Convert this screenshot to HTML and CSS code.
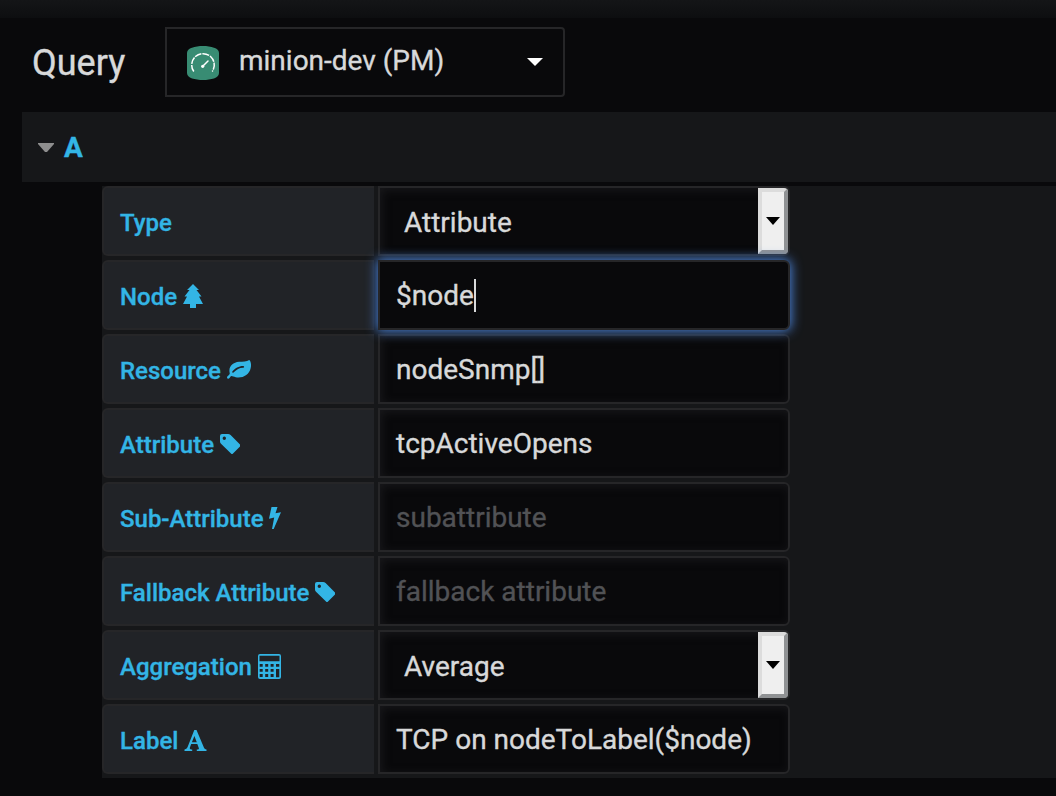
FILE: index.html
```html
<!DOCTYPE html>
<html lang="en">
<head>
<meta charset="utf-8">
<title>Query</title>
<link rel="stylesheet" href="styles.css">
</head>
<body>
<div class="topbar"></div>
<header class="header">
  <h1 class="title">Query</h1>
  <div class="picker">
    <svg class="logo" width="32" height="34" viewBox="0 0 32 34" fill="none">
      <path d="M0 7C0 2 8 0 16 0s16 2 16 7v20c0 5-8 7-16 7S0 32 0 27z" fill="#388c73"/>
      <path d="M6.800 25.500A11.300 11.300 0 1 1 25.200 25.500" stroke="#fff" stroke-width="1.500" stroke-dasharray="7 1"/>
      <path d="M16 20l5-5" stroke="#fff" stroke-width="1.500" stroke-linecap="round"/>
      <circle cx="15.700" cy="20.300" r="1.600" fill="#fff"/>
    </svg>
    <span class="picker-name">minion-dev (PM)</span>
    <svg class="picker-caret" width="16" height="8" viewBox="0 0 16 8"><path d="M0 0h16L8 8z" fill="#fff"/></svg>
  </div>
</header>
<section class="query-head">
  <svg width="16" height="9" viewBox="0 0 16 9"><path d="M0 0h16v1L9 9H7L0 1z" fill="#8e8e8e"/></svg>
  <span class="query-letter">A</span>
</section>
<main class="rows">
  <div class="row"><div class="label">Type</div><div class="field select"><span class="text">Attribute</span><span class="drop"><svg width="14" height="8" viewBox="0 0 14 8"><path d="M0 0h14L7 8z"/></svg></span></div></div>
  <div class="row"><div class="label">Node
    <svg class="icon tree" width="20" height="24" viewBox="0 0 20 24"><path d="M10 0l6 6h-2.500l5 6.500H16l4 7.500h-7v4H7v-4H0l4-7.500H1.500l5-6.500H4z"/></svg></div><div class="field focused"><span class="text">$node</span><span class="cursor"></span></div></div>
  <div class="row"><div class="label">Resource
    <svg class="icon leaf" width="24" height="19" viewBox="0 0 24 19"><path fill-rule="evenodd" d="M22.300 0C24 1.500 24.400 5 23.700 8c-1.500 7-8 10.500-15 9.300-1.800-.4-3-1.200-4.300-1.200-1.300.2-1.600 2.600-3 2.600C.5 18.700 0 18 0 17.200c.2-1.500 2.700-2.300 2.800-3.800C1 7 5.500 2.500 12 1.800 16 1.400 19.500 2 22.300 0zM6.500 12.500c3.500-3 5.500-4.600 9.700-4.700 1.200 0 1.300-1.600 0-1.700C12 6 8 8.500 5.500 11.300c-.8 1 .1 2 1 1.200z"/></svg></div><div class="field"><span class="text">nodeSnmp[]</span></div></div>
  <div class="row"><div class="label">Attribute
    <svg class="icon tag" width="20" height="20" viewBox="0 0 20 20"><path fill-rule="evenodd" d="M0 2Q0 0 2 0h6q1.500 0 2.600 1L20 10.500q.8 1 0 2L13 19.500q-1 1-2 0L1 9.700Q0 8.700 0 7.500zM4.300 2.600a1.700 1.700 0 1 0 0 3.400 1.700 1.700 0 0 0 0-3.400z"/></svg></div><div class="field"><span class="text">tcpActiveOpens</span></div></div>
  <div class="row"><div class="label">Sub-Attribute
    <svg class="icon bolt" width="12" height="22" viewBox="0 0 12 22"><path d="M2.500 0h6L6.500 6.300l5.500-1L4.700 22H3l2.200-11.500L0 11.700z"/></svg></div><div class="field"><span class="text hint">subattribute</span></div></div>
  <div class="row"><div class="label">Fallback Attribute
    <svg class="icon tag" width="20" height="20" viewBox="0 0 20 20"><path fill-rule="evenodd" d="M0 2Q0 0 2 0h6q1.500 0 2.600 1L20 10.500q.8 1 0 2L13 19.500q-1 1-2 0L1 9.700Q0 8.700 0 7.500zM4.300 2.600a1.700 1.700 0 1 0 0 3.400 1.700 1.700 0 0 0 0-3.400z"/></svg></div><div class="field"><span class="text hint">fallback attribute</span></div></div>
  <div class="row"><div class="label">Aggregation
    <svg class="icon calc" width="23" height="25" viewBox="0 0 23 25"><path fill-rule="evenodd" d="M2 0h19q2 0 2 2v21q0 2-2 2H2q-2 0-2-2V2Q0 0 2 0zM1.500 1.700v5.600h20V1.700zM1.700 10v2.800h3V10zM7.200 10v2.800h3V10zM12.600 10v2.800h3V10zM18 10v2.800h3.300V10zM1.700 15v2.800h3V15zM7.200 15v2.800h3V15zM12.600 15v2.800h3V15zM18 15v8.300h3.300V15zM1.700 20v3h3v-3zM7.200 20v3h3v-3zM12.600 20v3h3v-3z"/></svg></div><div class="field select"><span class="text">Average</span><span class="drop"><svg width="14" height="8" viewBox="0 0 14 8"><path d="M0 0h14L7 8z"/></svg></span></div></div>
  <div class="row"><div class="label">Label
    <svg class="icon font" width="23" height="21" viewBox="0 0 23 21"><path fill-rule="evenodd" d="M10.300 0h2.200L20 17.700q.6 1.700 2.500 1.900V21H12.800v-1.400q2.600 0 2-1.600l-1.500-4H7.200L5.900 17.500q-.6 2 2.300 2.100V21H.5v-1.400q2.200-.3 3-2.300zM7.900 12.300h4.900L10.400 6z"/></svg></div><div class="field"><span class="text">TCP on nodeToLabel($node)</span></div></div>
</main>
</body>
</html>
```
FILE: styles.css
```css
* { box-sizing: border-box; }
body { margin: 0; height: 796px; overflow: hidden; background: #09090b; color: #d8d9da; font-family: Roboto, sans-serif; -webkit-text-stroke: .35px currentColor; }
svg { display: block; flex: none; }
.topbar { height: 18px; background: linear-gradient(#141517, #0d0e10); }
.header { display: flex; align-items: center; height: 94px; padding: 0 0 6px 32px; }
.title { margin: 0; width: 133px; font-size: 36px; font-weight: 400; line-height: 42px; padding-top: 2px; }
.picker { display: flex; align-items: center; width: 400px; height: 70px; border: 2px solid #262628; border-radius: 0 4px 4px 0; padding: 0 20px; }
.picker-name { margin-left: 20px; font-size: 28px; line-height: 32px; padding-bottom: 3px; }
.logo { margin-top: 2px; }
.picker-caret { margin-left: auto; }
.query-head { display: flex; align-items: center; gap: 2px; height: 70px; margin-left: 22px; padding-left: 16px; background: #161719; }
.query-letter { margin-left: 8px; font-size: 28px; font-weight: 700; color: #33b5e5; }
.rows { display: grid; grid-auto-rows: 70px; row-gap: 4px; margin: 4px 0 0 102px; padding-bottom: 4px; background: #161719; }
.row { display: flex; gap: 4px; }
.label { display: flex; align-items: center; width: 272px; padding: 4px 0 0 16px; background: #212327; border: 2px solid #262628; border-right: 0; border-radius: 6px 0 0 6px; color: #33b5e5; font-size: 24px; font-weight: 500; }
.icon { margin: 0 0 2px 6px; fill: #33b5e5; }
.bolt { margin-left: 5px; }
.leaf { margin-bottom: 4px; }
.field { display: flex; align-items: center; width: 412px; background: #09090b; border: 2px solid #262628; border-radius: 0 6px 6px 0; padding-left: 16px; font-size: 28px; box-shadow: inset 2px 2px 10px rgba(36, 37, 40, .55); }
.focused { position: relative; box-shadow: 0 0 12px 1px #4c86df; }
.text { padding-top: 2px; line-height: 32px; white-space: nowrap; }
.hint { color: #515255; }
.cursor { width: 2px; height: 33px; background: #d8d9da; }
.select { padding-left: 24px; }
.select .text { padding-top: 3px; }
.drop { display: grid; place-items: center; width: 30px; height: 66px; margin-left: auto; padding-bottom: 1px; background: #efefef; border: 4px solid; border-color: #dcdcdc #909294 #909294 #dcdcdc; border-radius: 0 4px 4px 0; }
```
